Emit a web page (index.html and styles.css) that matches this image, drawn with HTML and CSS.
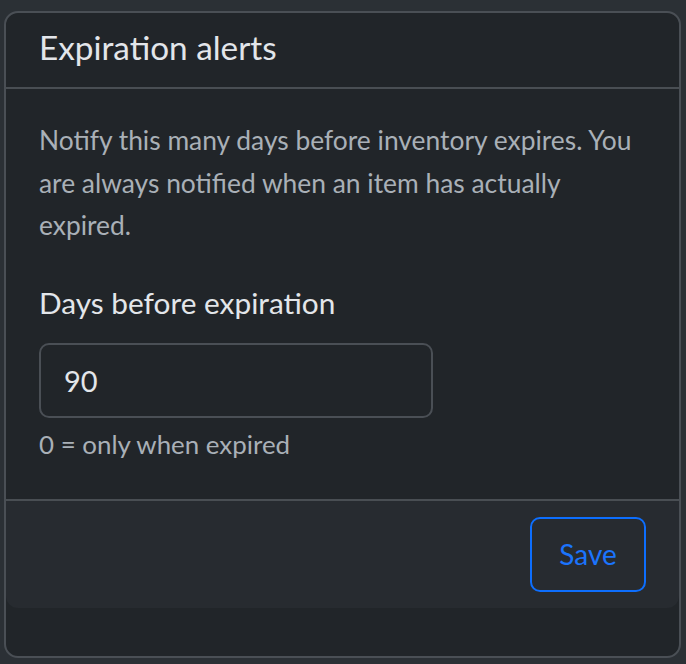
FILE: index.html
```html
<!DOCTYPE html>
<html lang="en">
<head>
<meta charset="utf-8">
<title>Expiration alerts</title>
<link rel="stylesheet" href="styles.css">
</head>
<body>
<div class="card">
  <form class="card-form">
    <div class="card-header">
      <h5 class="card-title">Expiration alerts</h5>
    </div>
    <div class="card-body">
      <p class="intro">Notify this many days before inventory expires. You are always notified when an item has actually expired.</p>
      <label class="form-label" for="days">Days before expiration</label>
      <input class="form-control" id="days" type="text" value="90">
      <div class="form-text">0 = only when expired</div>
    </div>
    <div class="card-footer">
      <button type="button" class="btn-save">Save</button>
    </div>
  </form>
</div>
</body>
</html>
```

FILE: styles.css
```css
html, body {
  margin: 0;
  padding: 0;
}
body {
  background: #2b3035;
  padding: 11px 5px 6px 4px;
  font-family: Lato, "Noto Sans", sans-serif;
  color: #dee2e6;
  box-sizing: border-box;
  height: 664px;
}
.card {
  height: 647px;
  box-sizing: border-box;
  border: 2px solid #4a4f55;
  border-radius: 14px;
  background: #212529;
  overflow: hidden;
}
.card-form {
  margin: 0;
  display: flex;
  flex-direction: column;
}
.card-header {
  height: 76px;
  box-sizing: border-box;
  border-bottom: 2px solid #494e53;
  padding: 0 33px 7px 33px;
  display: flex;
  align-items: center;
}
.card-title {
  margin: 0;
  font-size: 33.3px;
  font-weight: 400;
  color: #e3e6ea;
}
.card-body {
  padding: 30px 33px 34px 33px;
  display: flex;
  flex-direction: column;
  align-items: flex-start;
}
.intro {
  margin: 0 0 35px 0;
  font-size: 26.4px;
  line-height: 42.5px;
  color: #a9b0b7;
}
.form-label {
  font-size: 29.8px;
  line-height: 42px;
  color: #e3e6ea;
  margin-bottom: 19px;
}
.form-control {
  width: 394px;
  height: 75px;
  box-sizing: border-box;
  border: 2px solid #4a4f55;
  border-radius: 10px;
  background: #212529;
  color: #e3e6ea;
  font-family: Lato, "Noto Sans", sans-serif;
  font-size: 29px;
  padding: 0 23px;
  outline: none;
}
.form-text {
  margin-top: 5px;
  font-size: 25.9px;
  line-height: 42px;
  color: #a9b0b7;
}
.card-footer {
  background: #272b30;
  border-top: 2px solid #494e53;
  border-radius: 0 0 12px 12px;
  padding: 16px 33px 16px 33px;
  display: flex;
  justify-content: flex-end;
}
.btn-save {
  width: 116px;
  height: 75px;
  box-sizing: border-box;
  border: 2px solid #0d6efd;
  border-radius: 10px;
  background: transparent;
  color: #1b74fd;
  font-family: Lato, "Noto Sans", sans-serif;
  font-size: 28px;
  padding: 0;
}
```
